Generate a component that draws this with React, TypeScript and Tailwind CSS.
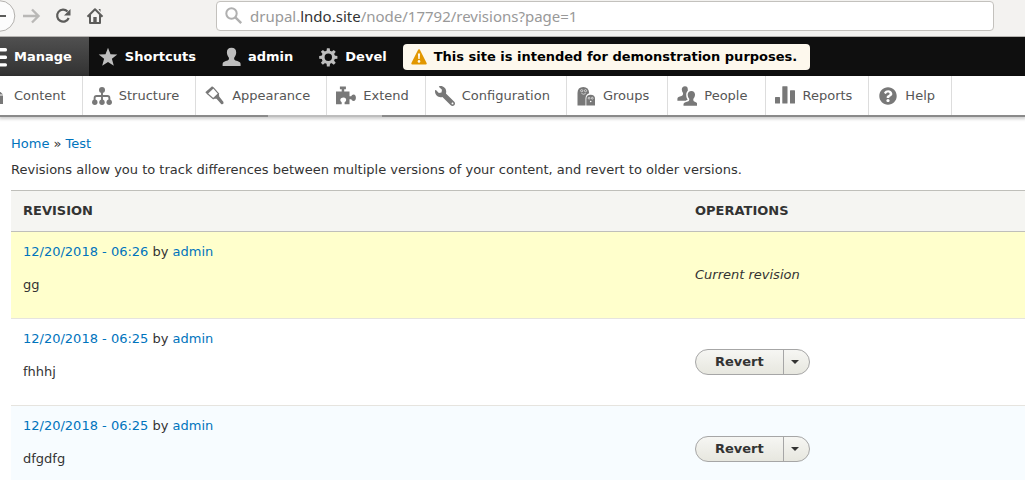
import type { ReactNode } from "react";
import { FaQuestionCircle, FaWrench } from "react-icons/fa";

function Icon({ children, className = "" }: { children: ReactNode; className?: string }) {
  return (
    <svg viewBox="0 0 20 20" fill="currentColor" aria-hidden="true" className={`size-5 shrink-0 ${className}`}>
      {children}
    </svg>
  );
}

const MenuIcon = () => (
  <Icon>
    <rect x="1" y="1" width="19" height="3.4" rx="1.5" />
    <rect x="1" y="8.6" width="19" height="3.4" rx="1.5" />
    <rect x="1" y="16.2" width="19" height="3.4" rx="1.5" />
  </Icon>
);

const StarIcon = () => (
  <Icon>
    <path d="M10 0.8 L12.5 7.3 L19.3 7.5 L13.9 11.8 L15.8 18.8 L10 14.9 L4.2 18.8 L6.1 11.8 L0.7 7.5 L7.5 7.3 Z" />
  </Icon>
);

const PersonIcon = () => (
  <Icon>
    <path d="M10.500 0.800c-3.100 0-4.700 2-4.600 4.800.1 2 .8 3.900 2 5.100.2 1.500-.1 2.300-1.300 2.800-2.500.8-4.900 1.300-5 3.300V19h18v-2.200c-.1-2-2.600-2.500-5.100-3.300-1.200-.5-1.500-1.300-1.300-2.800 1.200-1.200 1.900-3.100 2-5.100C15.300 2.800 13.600.8 10.500.8z" />
  </Icon>
);

const teeth = [0, 45, 90, 135, 180, 225, 270, 315];

const GearIcon = () => (
  <Icon>
    <circle cx="10.300" cy="10.300" r="5.200" fill="none" stroke="currentColor" strokeWidth="3" />
    {teeth.map((a) => (
      <path key={a} d="M8.500 4.500 L8.900 1.200 H11.700 L12.100 4.500 Z" transform={`rotate(${a} 10.300 10.300)`} />
    ))}
  </Icon>
);

const FileIcon = () => (
  <Icon>
    <path d="M1 2h7v2.500H4V15H1z" />
    <path d="M5.500 5h6v4.500h4.500v8.500H5.500z" />
    <path d="M12.500 5l3.500 3.500h-3.500z" />
  </Icon>
);

const StructureIcon = () => (
  <Icon>
    <path d="M10 4v12M2.600 16v-4q0-2 2-2h10.800q2 0 2 2v4" fill="none" stroke="currentColor" strokeWidth="1.900" />
    <circle cx="10" cy="4" r="3" />
    <circle cx="2.800" cy="16.300" r="2.700" />
    <circle cx="10" cy="16.300" r="2.700" />
    <circle cx="17.200" cy="16.300" r="2.700" />
  </Icon>
);

const BrushIcon = () => (
  <Icon>
    <path d="M0.300 6.200 L7.100 0.200 L9 2 L2.400 8.200 Z" />
    <path d="M8.200 1.700 L13.500 7.700 L8.200 12.600 L2 7.200" fill="none" stroke="currentColor" strokeWidth="1.200" />
    <path d="M8.300 12.800 L13.900 7.300 L14.200 10.500 L18.500 16 Q19 18.800 16.400 18.200 L11.500 12.800 Z" />
  </Icon>
);

const PuzzleIcon = () => (
  <Icon>
    <path d="M0 5.400H5.700V3.300H3.900V0.400H9.900V3.300H8.200V5.400H13.500V10.200H15.200Q15.700 8.400 17.600 8.400Q19.900 8.700 19.900 11.700Q19.900 14.800 17.600 15Q15.700 15 15.200 13.200H13.500V18.200H8.600V16.300Q10.700 15.500 10.100 12.900Q9.300 11.500 7.200 11.500Q5.100 11.500 4.400 13Q3.800 15.400 5.700 16.300V18.200H0Z" />
  </Icon>
);

const WrenchIcon = () => <FaWrench aria-hidden="true" className="size-5 shrink-0 -scale-x-100" />;

const GhostsIcon = () => (
  <Icon>
    <path d="M1.500 19.500V7Q1.500 1 7.300 1Q12.800 1 13.200 7.200Q9.500 8.500 9.500 12.500V19.500Z" />
    <path d="M10.300 19.500V13Q10.300 8.800 14.600 8.800Q19 8.800 19 13V19.500Z" />
    <g fill="none" stroke="white" strokeWidth="0.600">
      <circle cx="5.700" cy="4.700" r="1.100" />
      <circle cx="9.500" cy="4.700" r="1.100" />
      <path d="M5.500 7.500Q7.500 9 9.700 7.500" />
      <circle cx="13.100" cy="12.200" r="0.900" />
      <circle cx="16.300" cy="12.200" r="0.900" />
    </g>
    <circle cx="14.700" cy="15.500" r="0.800" fill="white" />
  </Icon>
);

const PeopleIcon = () => (
  <Icon>
    <path d="M8 0.300c-2 0-3.300 1.300-3.200 3.300.1 1.500.5 2.600 1.200 3.400.2 1.600-.1 2.400-1.500 2.900-2.400.7-4.100 1.100-4.100 2.900v1.900h8.400q1-.8 2-1.200c-1-1-1.500-2.600-1.600-4.600 0-1.800.6-3.200 1.600-4.100V3.500C10.700 1.500 10 .3 8 .3z" />
    <path d="M14.400 4.900c-2.300 0-3.800 1.500-3.700 3.900.1 1.700.6 3.100 1.500 4 .2 1.600-.2 2.300-1.500 2.700-2.200.7-4.200 1.100-4.200 2.800v1.500h14v-1.500c0-1.700-1.500-2.100-3.200-2.800-1-.5-1.100-1.300-.9-2.700.9-.9 1.500-2.300 1.600-4 .1-2.400-1.300-3.900-3.600-3.900z" />
  </Icon>
);

const ChartIcon = () => (
  <Icon>
    <rect x="0" y="11" width="5" height="6.500" rx="0.500" />
    <rect x="7.300" y="0.300" width="5.200" height="17.200" rx="0.500" />
    <rect x="15" y="4.300" width="5" height="13.200" rx="0.500" />
  </Icon>
);

const HelpIcon = () => (
  <span className="flex size-5 shrink-0 items-center justify-center">
    <FaQuestionCircle aria-hidden="true" className="size-[18px]" />
  </span>
);

const WarningIcon = () => (
  <svg viewBox="0 0 16 16" aria-hidden="true" className="size-4 shrink-0">
    <path d="M8 1.200 L14.700 14.500 H1.300 Z" fill="#e29700" stroke="#e29700" strokeWidth="2" strokeLinejoin="round" />
    <path d="M6.900 4.500h2.200l-.4 5.500H7.300z" fill="#fdf8ed" />
    <circle cx="8" cy="12.400" r="1.300" fill="#fdf8ed" />
  </svg>
);

const tabs = [
  { label: "Manage", icon: <MenuIcon />, active: true },
  { label: "Shortcuts", icon: <StarIcon /> },
  { label: "admin", icon: <PersonIcon /> },
  { label: "Devel", icon: <GearIcon /> },
];

const menu = [
  { label: "Content", icon: <FileIcon />, pad: "pr-4" },
  { label: "Structure", icon: <StructureIcon />, pad: "pr-4" },
  { label: "Appearance", icon: <BrushIcon />, pad: "pr-4" },
  { label: "Extend", icon: <PuzzleIcon />, pad: "pr-4" },
  { label: "Configuration", icon: <WrenchIcon />, pad: "pr-4" },
  { label: "Groups", icon: <GhostsIcon />, pad: "pr-[18px]" },
  { label: "People", icon: <PeopleIcon />, pad: "pr-[18px]" },
  { label: "Reports", icon: <ChartIcon />, pad: "pr-4" },
  { label: "Help", icon: <HelpIcon />, pad: "pr-4" },
];

const revisions = [
  { date: "12/20/2018 - 06:26", author: "admin", log: "gg", current: true, tone: "bg-[#ffffcc]" },
  { date: "12/20/2018 - 06:25", author: "admin", log: "fhhhj", current: false, tone: "bg-white" },
  { date: "12/20/2018 - 06:25", author: "admin", log: "dfgdfg", current: false, tone: "bg-[#f7fcff]" },
];

function BrowserBar() {
  return (
    <div className="flex h-[37px] items-start border-b border-[#b6b4b1] bg-[#f3f2f0]">
      <div className="-ml-4 flex text-[#5c5c5a]">
        <button aria-label="Back" className="h-8 w-8">
          <svg viewBox="0 0 32 32" className="size-8" fill="none" stroke="currentColor" strokeWidth="2">
            <circle cx="15.500" cy="16" r="15.300" fill="#fcfcfc" stroke="#b3b1ae" strokeWidth="1" />
            <path d="M9 16h13" />
          </svg>
        </button>
        <button aria-label="Forward" className="h-8 w-8 text-[#b9b8b6]">
          <svg viewBox="0 0 32 32" className="size-8" fill="none" stroke="currentColor" strokeWidth="2.400">
            <path d="M7 16h15M16 9.500l6.500 6.500-6.500 6.500" />
          </svg>
        </button>
        <button aria-label="Reload" className="h-8 w-8">
          <svg viewBox="0 0 32 32" className="size-8" fill="none" stroke="currentColor" strokeWidth="2.200">
            <path d="M19.500 11.500A6 6 0 1 0 20.700 18" />
            <path d="M22.500 9v6.500h-6.500z" fill="currentColor" stroke="none" />
          </svg>
        </button>
        <button aria-label="Home" className="h-8 w-8">
          <svg viewBox="0 0 32 32" className="size-8" fill="none" stroke="currentColor" strokeWidth="2">
            <path d="M7.500 16.700L15 9.200l7.500 7.500M10 15v8h10v-8" strokeLinejoin="round" />
            <path d="M13.300 17h3.400v6h-3.400z" fill="currentColor" stroke="none" />
            <path d="M18.500 9h2v3z" fill="currentColor" stroke="none" />
          </svg>
        </button>
      </div>
      <div className="mt-px mr-[31px] ml-[104px] flex h-[30px] flex-1 items-center gap-[7px] rounded border border-[#c3c1bd] bg-white pl-2">
        <svg viewBox="0 0 18 18" className="size-[18px]" fill="none" stroke="#b0b0b0" strokeWidth="2" aria-hidden="true">
          <circle cx="6.500" cy="6.500" r="5.200" />
          <path d="M10.400 10.400l5.800 5.800" strokeWidth="2.400" />
        </svg>
        <p className="font-['Noto_Sans','Open_Sans',sans-serif] text-[15px] leading-5 text-[#999]">
          drupal.<span className="text-[#333]">lndo.site</span>/node/17792/revisions?page=1
        </p>
      </div>
    </div>
  );
}

function OperationButton() {
  return (
    <div className="inline-flex h-[26px] items-stretch overflow-hidden rounded-full border border-[#a6a6a6] bg-linear-to-b from-[#f6f6f3] to-[#e7e7df] align-middle">
      <button className="px-[19px] font-bold text-[#333]">Revert</button>
      <button aria-label="List additional actions" className="flex w-[26px] items-center border-l border-[#a6a6a6] pl-[7px]">
        <svg viewBox="0 0 8 4" className="h-1 w-2" aria-hidden="true">
          <path d="M0 0h8L4 4z" fill="#333" />
        </svg>
      </button>
    </div>
  );
}

const link = "text-[#0074bd]";

export default function App() {
  return (
    <div className="h-screen overflow-hidden bg-white font-['DejaVu_Sans',sans-serif] text-[13px] leading-5 text-[#333]">
      <BrowserBar />
      <nav aria-label="Toolbar" className="flex h-[39px] items-stretch bg-[#0f0f0f] font-bold text-white">
        <div className="-ml-[22px] flex">
          {tabs.map((t) => (
            <a
              key={t.label}
              href="#"
              className={`flex items-center gap-[7px] pl-[9px] ${
                t.active ? "bg-linear-to-b from-[#505050] to-[#323232] pr-[17px]" : "pr-4"
              }`}
            >
              <span className={t.active ? "text-white" : "text-[#bebebe]"}>{t.icon}</span>
              {t.label}
            </a>
          ))}
        </div>
        <div className="flex h-[26px] items-center gap-[7px] self-center rounded bg-[#fdf8ed] pr-[13px] pl-2 text-black">
          <WarningIcon />
          This site is intended for demonstration purposes.
        </div>
      </nav>
      <nav
        aria-label="Administration menu"
        className="relative flex h-[41px] border-b-2 border-[#8a8a8a] bg-white text-[#565656] shadow-[0_1px_3px_1px_rgba(0,0,0,0.2)]"
      >
        <div className="-ml-[22px] flex">
          {menu.map((m) => (
            <a
              key={m.label}
              href="#"
              className={`flex items-center gap-[7px] border-r border-[#dddddd] pl-[9px] ${m.pad}`}
            >
              <span className="text-[#787878]">{m.icon}</span>
              {m.label}
            </a>
          ))}
        </div>
        <span className="absolute top-[39px] left-[268px] h-0.5 w-[114px] bg-[#bdbdbd]" />
      </nav>
      <main className="pt-[17px] pl-[11px]">
        <nav aria-label="Breadcrumb">
          <a href="#" className={link}>Home</a> » <a href="#" className={link}>Test</a>
        </nav>
        <p className="mt-1.5">
          Revisions allow you to track differences between multiple versions of your content, and revert to older versions.
        </p>
        <table className="mt-2.5 w-full table-fixed border-collapse text-left">
          <thead>
            <tr className="h-[41px] border-y border-[#bfbfba] bg-[#f5f5f2] uppercase">
              <th className="px-3 font-bold">Revision</th>
              <th className="w-[342px] px-3 font-bold">Operations</th>
            </tr>
          </thead>
          <tbody>
            {revisions.map((r) => (
              <tr key={r.log} className={`border-b border-[#e6e4df] ${r.tone}`}>
                <td className="px-3 py-2.5">
                  <a href="#" className={link}>{r.date}</a> by <a href="#" className={link}>{r.author}</a>
                  <p className="my-[13px]">{r.log}</p>
                </td>
                <td className="px-3">{r.current ? <em>Current revision</em> : <OperationButton />}</td>
              </tr>
            ))}
          </tbody>
        </table>
      </main>
    </div>
  );
}
